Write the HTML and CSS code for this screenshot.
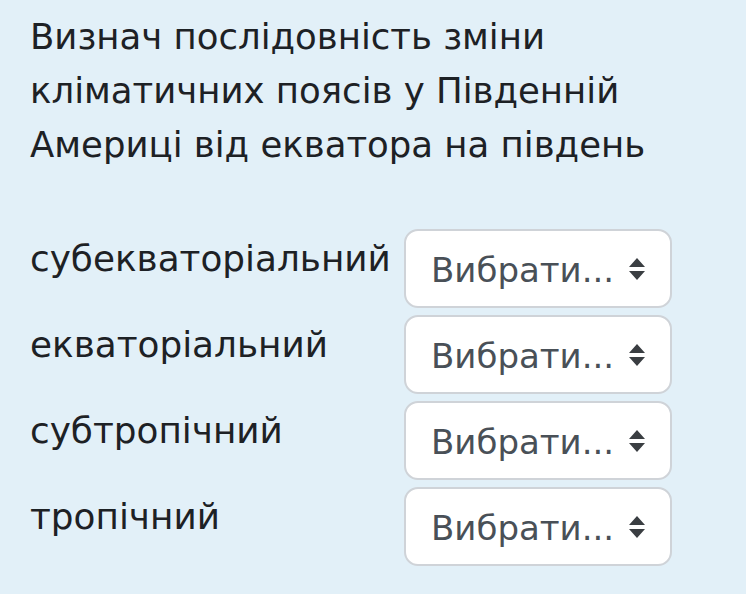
FILE: index.html
```html
<!DOCTYPE html>
<html lang="uk">
<head>
<meta charset="utf-8">
<link rel="stylesheet" href="styles.css">
</head>
<body>
<div class="question">
  <p class="qtext">Визнач послідовність зміни<br>кліматичних поясів у Південній<br>Америці від екватора на південь</p>
  <div class="answers">
    <div class="row">
      <div class="label">субекваторіальний</div>
      <div class="select"><span class="val">Вибрати...</span><svg class="arrow" viewBox="0 0 16 22" width="16" height="22"><path d="M8 0 L16 9 L0 9 Z M0 13 L16 13 L8 22 Z" fill="#3a3e42"/></svg></div>
    </div>
    <div class="row">
      <div class="label">екваторіальний</div>
      <div class="select"><span class="val">Вибрати...</span><svg class="arrow" viewBox="0 0 16 22" width="16" height="22"><path d="M8 0 L16 9 L0 9 Z M0 13 L16 13 L8 22 Z" fill="#3a3e42"/></svg></div>
    </div>
    <div class="row">
      <div class="label">субтропічний</div>
      <div class="select"><span class="val">Вибрати...</span><svg class="arrow" viewBox="0 0 16 22" width="16" height="22"><path d="M8 0 L16 9 L0 9 Z M0 13 L16 13 L8 22 Z" fill="#3a3e42"/></svg></div>
    </div>
    <div class="row">
      <div class="label">тропічний</div>
      <div class="select"><span class="val">Вибрати...</span><svg class="arrow" viewBox="0 0 16 22" width="16" height="22"><path d="M8 0 L16 9 L0 9 Z M0 13 L16 13 L8 22 Z" fill="#3a3e42"/></svg></div>
    </div>
  </div>
</div>
</body>
</html>
```
FILE: styles.css
```css
html, body {
  margin: 0;
  padding: 0;
  background: #e2f0f8;
}
body {
  width: 746px;
  height: 594px;
  overflow: hidden;
  font-family: "DejaVu Sans", sans-serif;
  color: #1d2125;
}
.question {
  padding: 10px 0 0 30px;
}
.qtext {
  margin: 0;
  font-size: 35.5px;
  line-height: 54px;
}
.answers {
  margin-top: 57px;
  display: flex;
  flex-direction: column;
  gap: 7px;
}
.row {
  display: flex;
  align-items: flex-start;
}
.label {
  width: 374px;
  padding-top: 3px;
  font-size: 35.8px;
  line-height: 54px;
}
.select {
  box-sizing: border-box;
  width: 268px;
  height: 79px;
  border: 2px solid #cfd3d8;
  border-radius: 14px;
  background: #fff;
  display: flex;
  align-items: center;
  padding: 0 25px 0 25px;
  justify-content: space-between;
}
.val {
  font-size: 34px;
  color: #495057;
  padding-top: 2px;
}
.arrow {
  display: block;
  margin-top: 1px;
}
```
